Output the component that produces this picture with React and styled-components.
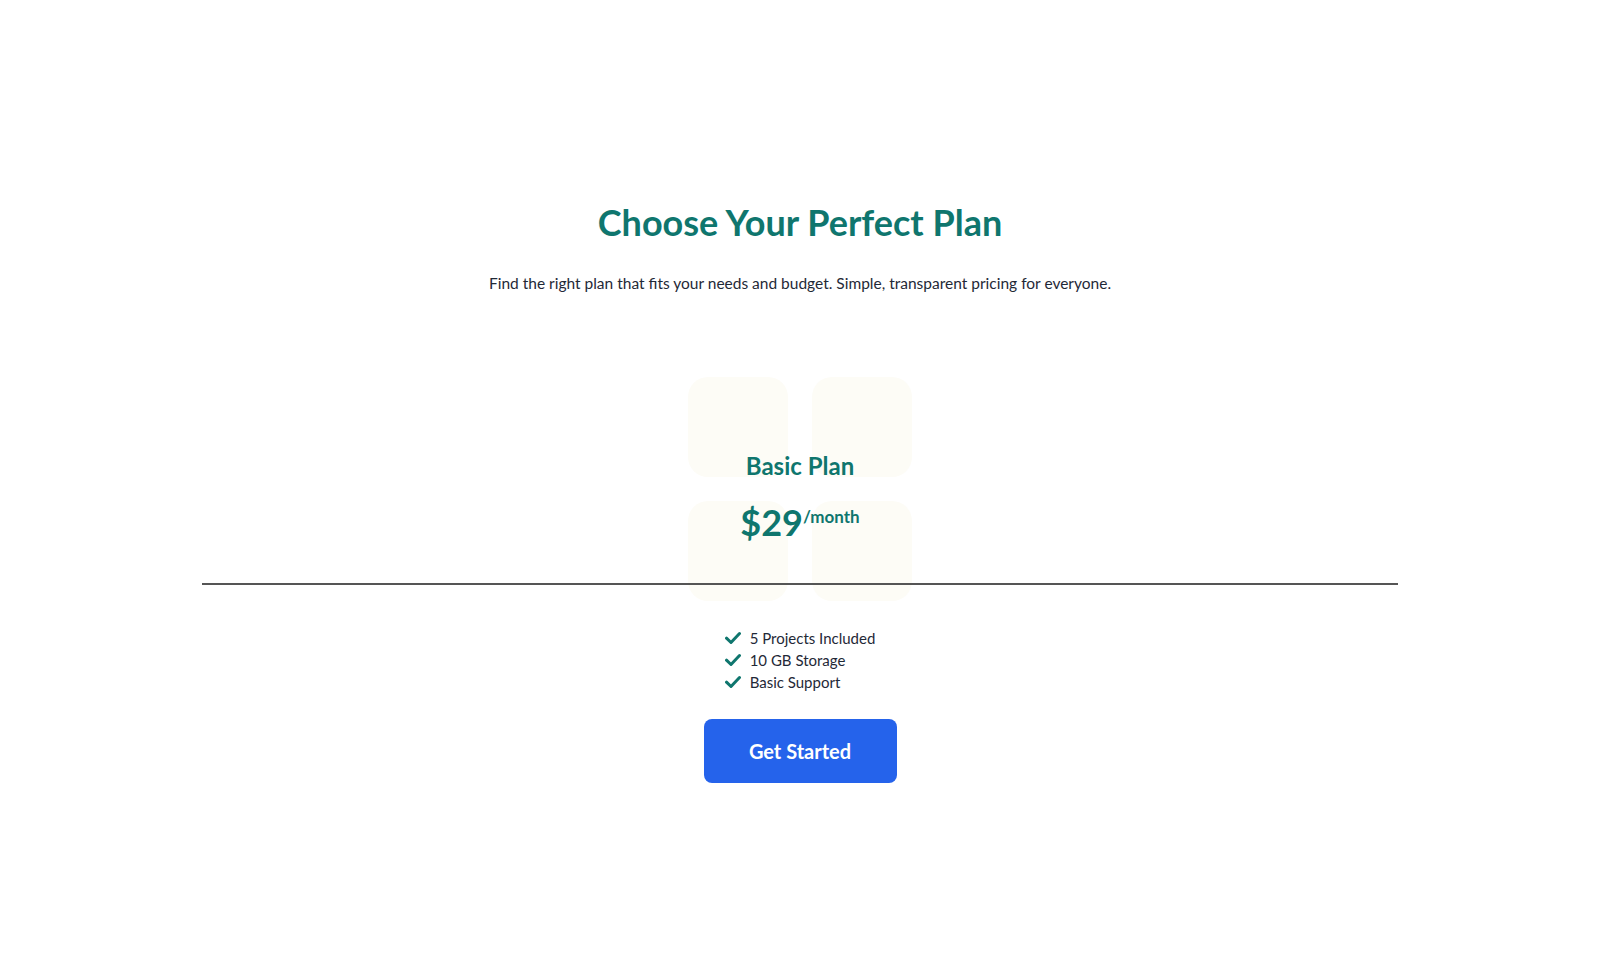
import React from 'react';
import styled, { createGlobalStyle } from 'styled-components';

const GlobalStyle = createGlobalStyle`
  html, body {
    margin: 0;
    padding: 0;
    background: #ffffff;
  }
  body {
    font-family: Lato, "Noto Sans", sans-serif;
    color: #1f2937;
  }
`;

const Page = styled.main`
  width: 1600px;
  min-height: 978px;
  display: flex;
  flex-direction: column;
  align-items: center;
  padding-top: 198px;
  box-sizing: border-box;
`;

const Title = styled.h1`
  margin: 0;
  font-size: 36px;
  line-height: 48px;
  font-weight: 700;
  color: #0f766e;
`;

const Subtitle = styled.p`
  margin: 25px 0 0;
  font-size: 15.5px;
  line-height: 24px;
  color: #1f2937;
`;

const Card = styled.section`
  width: 1196px;
  margin-top: 82px;
  display: flex;
  flex-direction: column;
  align-items: center;
`;

const Header = styled.div`
  position: relative;
  width: 224px;
  height: 224px;
  display: flex;
  flex-direction: column;
  align-items: center;
  justify-content: flex-end;
  padding-bottom: 58px;
  box-sizing: border-box;
`;

const Tiles = styled.div`
  position: absolute;
  inset: 0;
  display: grid;
  grid-template-columns: 100px 100px;
  grid-template-rows: 100px 100px;
  gap: 24px;
  z-index: 0;
`;

const Tile = styled.div`
  background: #fdfcf6;
  border-radius: 20px;
`;

const PlanName = styled.h2`
  position: relative;
  margin: 0;
  font-size: 24px;
  line-height: 30px;
  font-weight: 700;
  color: #0f766e;
`;

const Price = styled.div`
  position: relative;
  margin-top: 20px;
  display: flex;
  align-items: flex-start;
  color: #0f766e;
  font-weight: 700;
`;

const Amount = styled.span`
  font-size: 36px;
  line-height: 42px;
`;

const Period = styled.span`
  font-size: 17px;
  line-height: 24px;
  margin-top: 4px;
`;

const Divider = styled.hr`
  width: 1196px;
  margin: -18px 0 0;
  border: none;
  border-top: 2px solid #555555;
  position: relative;
`;

const Features = styled.ul`
  list-style: none;
  margin: 42px 0 0;
  padding: 0;
  display: flex;
  flex-direction: column;
`;

const Feature = styled.li`
  display: flex;
  align-items: center;
  gap: 9px;
  font-size: 15px;
  line-height: 22px;
  color: #1f2937;
`;

const Button = styled.button`
  margin-top: 26px;
  width: 193px;
  height: 64px;
  border: none;
  border-radius: 8px;
  background: #2563eb;
  color: #ffffff;
  font-family: Lato, "Noto Sans", sans-serif;
  font-size: 20px;
  font-weight: 700;
  cursor: pointer;
`;

const Check = () => (
  <svg width="16" height="14" viewBox="0 0 16 14" fill="none">
    <path d="M1.5 7.2 L6 11.5 L14.5 2.5" stroke="#0f766e" strokeWidth="3" strokeLinecap="round" strokeLinejoin="round" />
  </svg>
);

const features = ['5 Projects Included', '10 GB Storage', 'Basic Support'];

export default function App() {
  return (
    <>
      <GlobalStyle />
      <Page>
        <Title>Choose Your Perfect Plan</Title>
        <Subtitle>
          Find the right plan that fits your needs and budget. Simple, transparent pricing for everyone.
        </Subtitle>
        <Card>
          <Header>
            <Tiles>
              <Tile />
              <Tile />
              <Tile />
              <Tile />
            </Tiles>
            <PlanName>Basic Plan</PlanName>
            <Price>
              <Amount>$29</Amount>
              <Period>/month</Period>
            </Price>
          </Header>
          <Divider />
          <Features>
            {features.map((f) => (
              <Feature key={f}>
                <Check />
                {f}
              </Feature>
            ))}
          </Features>
          <Button>Get Started</Button>
        </Card>
      </Page>
    </>
  );
}
